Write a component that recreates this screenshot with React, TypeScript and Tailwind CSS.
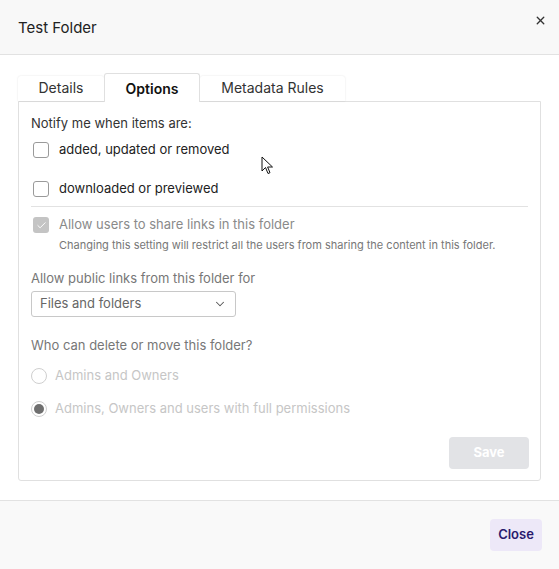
import { X, ChevronDown, Check } from 'lucide-react';

export default function App() {
  return (
    <div className="relative w-[559px] h-[569px] bg-white flex flex-col text-[#333] font-['Inter','Noto_Sans',sans-serif]">
      {/* Header */}
      <div className="h-[55px] shrink-0 bg-[#f8f8f8] border-b border-[#e2e2e2] flex items-center justify-between pl-[18px] pr-[12px]">
        <h1 className="text-[15px] text-[#222] leading-none">Test Folder</h1>
        <button className="self-start mt-[14px] text-[#333]" aria-label="Close">
          <X className="w-[13px] h-[13px]" strokeWidth={2.5} />
        </button>
      </div>

      {/* Body */}
      <div className="flex-1 px-[18px] pt-[18px]">
        {/* Tabs */}
        <div className="flex items-end h-[28px]">
          <div className="w-[86px] h-[25px] pb-[2px] flex items-center justify-center text-[14px] text-[#333] rounded-t-[3px] shadow-[0_0_2px_rgba(0,0,0,0.12)]">
            Details
          </div>
          <div className="w-[96px] h-[29px] pt-[1px] flex items-center justify-center text-[14px] font-semibold text-[#111] bg-white border border-b-0 border-[#e0e0e0] rounded-t-[3px] relative top-[1px] z-10">
            Options
          </div>
          <div className="w-[145px] h-[25px] pb-[2px] flex items-center justify-center text-[14px] text-[#333] rounded-t-[3px] shadow-[0_0_2px_rgba(0,0,0,0.12)]">
            Metadata Rules
          </div>
        </div>

        {/* Panel */}
        <div className="w-[523px] h-[380px] border border-[#e0e0e0] rounded-b-[3px] pl-[12px] pr-[11px] pt-[12px] flex flex-col">
          <p className="text-[13px] leading-[18px] text-[#333]">Notify me when items are:</p>

          <label className="flex items-center gap-[10px] mt-[8px] ml-[2px] h-[20px]">
            <span className="w-[16px] h-[16px] rounded-[3px] border border-[#9a9a9a] bg-white" />
            <span className="text-[13px] text-[#222]">added, updated or removed</span>
          </label>

          <label className="flex items-center gap-[10px] mt-[19px] ml-[2px] h-[20px]">
            <span className="w-[16px] h-[16px] rounded-[3px] border border-[#9a9a9a] bg-white" />
            <span className="text-[13px] text-[#222]">downloaded or previewed</span>
          </label>

          <div className="border-t border-[#e2e2e2] mt-[7px] mr-[1px]" />

          <label className="flex items-center gap-[10px] mt-[8px] ml-[2px] h-[20px]">
            <span className="w-[16px] h-[16px] rounded-[3px] bg-[#c4c4c4] flex items-center justify-center">
              <Check className="w-[11px] h-[11px] text-white" strokeWidth={2} />
            </span>
            <span className="text-[13px] text-[#8a8a8a]">Allow users to share links in this folder</span>
          </label>
          <p className="text-[11px] text-[#777] ml-[28px] mt-[3px] leading-[14px]">
            Changing this setting will restrict all the users from sharing the content in this folder.
          </p>

          <p className="text-[13px] text-[#777] mt-[17px] leading-[18px]">Allow public links from this folder for</p>
          <div className="mt-[4px] w-[205px] h-[26px] border border-[#c8c8c8] rounded-[3px] flex items-center justify-between pl-[8px] pr-[8px]">
            <span className="text-[13px] text-[#666]">Files and folders</span>
            <ChevronDown className="w-[14px] h-[14px] text-[#555]" strokeWidth={1.75} />
          </div>

          <p className="text-[13px] text-[#777] mt-[19px] leading-[18px]">Who can delete or move this folder?</p>

          <label className="flex items-center gap-[8px] mt-[12px] h-[20px]">
            <span className="w-[16px] h-[16px] rounded-full border border-[#cfcfcf] bg-white" />
            <span className="text-[13px] text-[#c6c6c6]">Admins and Owners</span>
          </label>

          <label className="flex items-center gap-[8px] mt-[13px] h-[20px]">
            <span className="w-[16px] h-[16px] rounded-full border border-[#cfcfcf] bg-white flex items-center justify-center">
              <span className="w-[10px] h-[10px] rounded-full bg-[#6f6f6f]" />
            </span>
            <span className="text-[13px] text-[#c6c6c6]">Admins, Owners and users with full permissions</span>
          </label>

          <div className="flex justify-end mt-[18px]">
            <button className="w-[80px] h-[32px] rounded-[4px] bg-[#e2e3e6] text-white text-[13px] font-bold">Save</button>
          </div>
        </div>
      </div>

      {/* Footer */}
      <div className="h-[69px] shrink-0 bg-[#f9f9f9] border-t border-[#e2e2e2] flex items-center justify-end pr-[17px]">
        <button className="w-[52px] h-[32px] rounded-[4px] bg-[#ede8f8] text-[#2a1a6e] text-[13px] font-semibold">Close</button>
      </div>

      {/* Mouse cursor */}
      <svg className="absolute left-[261px] top-[156px]" width="13" height="20" viewBox="0 0 13 20">
        <path d="M1 1 L1 15 L4.5 11.5 L7 17.5 L9 16.7 L6.6 11 L11.5 11 Z" fill="white" stroke="#111" strokeWidth="1" strokeLinejoin="round" />
      </svg>
    </div>
  );
}
